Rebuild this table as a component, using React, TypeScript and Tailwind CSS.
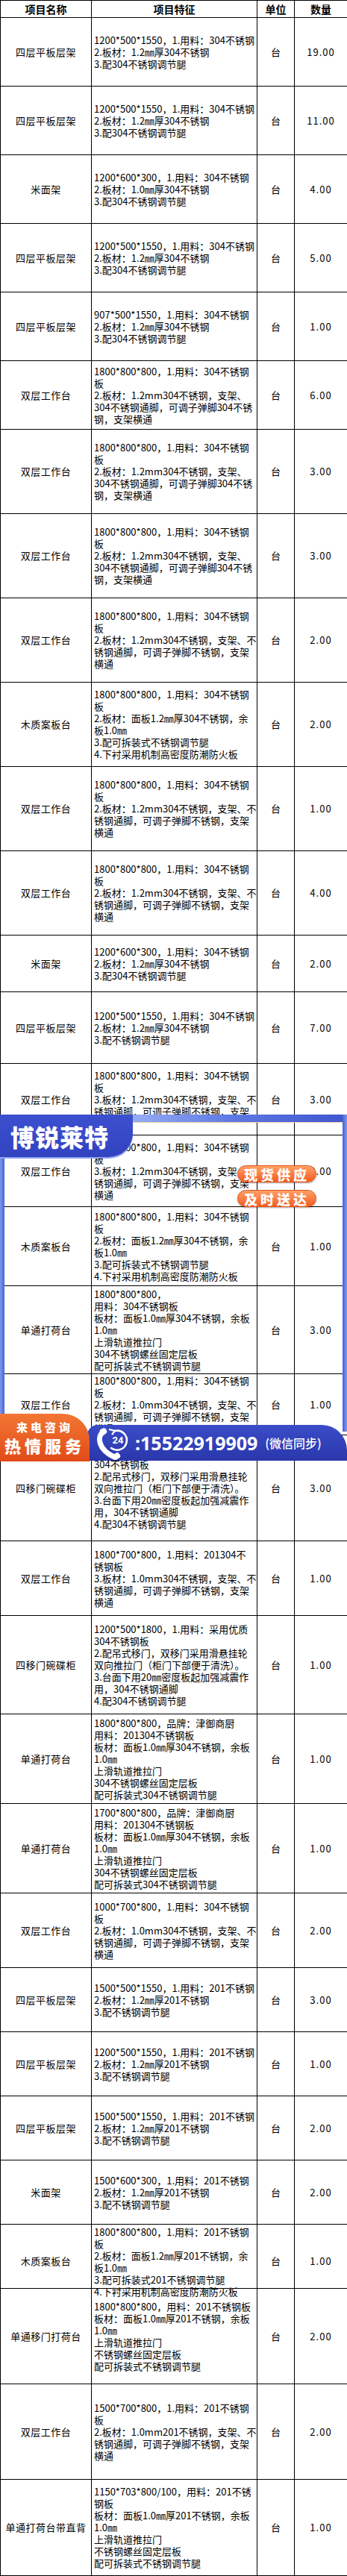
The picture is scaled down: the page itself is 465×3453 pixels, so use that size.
import React from 'react'

type Row = {
  name: string
  lines: string[]
  qty: string
  h: string
  top?: boolean
}

const shelf304 = (size: string, mm: string, leg: string) => [
  `${size}，1.用料：304不锈钢`,
  `2.板材：${mm}㎜厚304不锈钢`,
  leg,
]

const shelf201 = (size: string) => [
  `${size}，1.用料：201不锈钢`,
  '2.板材：1.2㎜厚201不锈钢',
  '3.配不锈钢调节腿',
]

// 双层工作台, old wording (304 legs)
const benchA = [
  '1800*800*800，1.用料：304不锈钢',
  '板',
  '2.板材：1.2mm304不锈钢，支架、',
  '304不锈钢通脚，可调子弹脚304不锈',
  '钢，支架横通',
]

const bench = (first: string, second: string, board: string) => [
  first,
  second,
  board,
  '锈钢通脚，可调子弹脚不锈钢，支架',
  '横通',
]

const wood = (mat: string, leg: string) => [
  `1800*800*800，1.用料：${mat}不锈钢`,
  '板',
  `2.板材：面板1.2㎜厚${mat}不锈钢，余`,
  '板1.0㎜',
  leg,
  '4.下衬采用机制高密度防潮防火板',
]

const cabinet = [
  '1200*500*1800，1.用料：采用优质',
  '304不锈钢板',
  '2.配吊式移门，双移门采用滑悬挂轮',
  '双向推拉门（柜门下部便于清洗）。',
  '3.台面下用20㎜密度板起加强减震作',
  '用，304不锈钢通脚',
  '4.配304不锈钢调节腿',
]

const counter = (size: string) => [
  `${size}，品牌：津御商厨`,
  '用料：201304不锈钢板',
  '板材：面板1.0㎜厚304不锈钢，余板',
  '1.0㎜',
  '上滑轨道推拉门',
  '304不锈钢螺丝固定层板',
  '配可拆装式304不锈钢调节腿',
]

const b304 = '1800*800*800，1.用料：304不锈钢'

const rows: Row[] = [
  { name: '四层平板层架', qty: '19.00', h: 'h-[92px]', lines: shelf304('1200*500*1550', '1.2', '3.配304不锈钢调节腿') },
  { name: '四层平板层架', qty: '11.00', h: 'h-[92px]', lines: shelf304('1200*500*1550', '1.2', '3.配304不锈钢调节腿') },
  { name: '米面架', qty: '4.00', h: 'h-[92px]', lines: shelf304('1200*600*300', '1.0', '3.配304不锈钢调节腿') },
  { name: '四层平板层架', qty: '5.00', h: 'h-[92px]', lines: shelf304('1200*500*1550', '1.2', '3.配304不锈钢调节腿') },
  { name: '四层平板层架', qty: '1.00', h: 'h-[92px]', lines: shelf304('907*500*1550', '1.2', '3.配304不锈钢调节腿') },
  { name: '双层工作台', qty: '6.00', h: 'h-[92px]', lines: benchA },
  { name: '双层工作台', qty: '3.00', h: 'h-[113px]', lines: benchA },
  { name: '双层工作台', qty: '3.00', h: 'h-[113px]', lines: benchA },
  { name: '双层工作台', qty: '2.00', h: 'h-[113px]', lines: bench(b304, '板', '2.板材：1.2mm304不锈钢，支架、不') },
  { name: '木质案板台', qty: '2.00', h: 'h-[113px]', lines: wood('304', '3.配可拆装式不锈钢调节腿') },
  { name: '双层工作台', qty: '1.00', h: 'h-[113px]', lines: bench(b304, '板', '2.板材：1.2mm304不锈钢，支架、不') },
  { name: '双层工作台', qty: '4.00', h: 'h-[113px]', lines: bench(b304, '板', '2.板材：1.2mm304不锈钢，支架、不') },
  { name: '米面架', qty: '2.00', h: 'h-[76px]', lines: shelf304('1200*600*300', '1.2', '3.配304不锈钢调节腿') },
  { name: '四层平板层架', qty: '7.00', h: 'h-[96px]', lines: shelf304('1200*500*1550', '1.2', '3.配不锈钢调节腿') },
  { name: '双层工作台', qty: '3.00', h: 'h-[96px]', lines: bench(b304, '板', '3.板材：1.2mm304不锈钢，支架、不') },
  { name: '双层工作台', qty: '3.00', h: 'h-[96px]', lines: bench(b304, '板', '3.板材：1.2mm304不锈钢，支架、不') },
  { name: '木质案板台', qty: '1.00', h: 'h-[106px]', lines: wood('304', '3.配可拆装式不锈钢调节腿') },
  {
    name: '单通打荷台',
    qty: '3.00',
    h: 'h-[118px]',
    lines: [
      '1800*800*800，',
      '用料：304不锈钢板',
      '板材：面板1.0㎜厚304不锈钢，余板',
      '1.0㎜',
      '上滑轨道推拉门',
      '304不锈钢螺丝固定层板',
      '配可拆装式不锈钢调节腿',
    ],
  },
  { name: '双层工作台', qty: '1.00', h: 'h-[82px]', lines: bench(b304, '板', '2.板材：1.0mm304不锈钢，支架、不') },
  { name: '四移门碗碟柜', qty: '3.00', h: 'h-[142px]', lines: cabinet },
  {
    name: '双层工作台',
    qty: '1.00',
    h: 'h-[100px]',
    lines: bench('1800*700*800，1.用料：201304不', '锈钢板', '3.板材：1.0mm304不锈钢，支架、不'),
  },
  { name: '四移门碗碟柜', qty: '1.00', h: 'h-[132px]', lines: cabinet },
  { name: '单通打荷台', qty: '1.00', h: 'h-[120px]', lines: counter('1800*800*800') },
  { name: '单通打荷台', qty: '1.00', h: 'h-[120px]', lines: counter('1700*800*800') },
  {
    name: '双层工作台',
    qty: '2.00',
    h: 'h-[100px]',
    lines: bench('1000*700*800，1.用料：304不锈钢', '板', '2.板材：1.0mm304不锈钢，支架、不'),
  },
  { name: '四层平板层架', qty: '3.00', h: 'h-[86px]', lines: shelf201('1500*500*1550') },
  { name: '四层平板层架', qty: '1.00', h: 'h-[86px]', lines: shelf201('1200*500*1550') },
  { name: '四层平板层架', qty: '2.00', h: 'h-[86px]', lines: shelf201('1500*500*1550') },
  { name: '米面架', qty: '2.00', h: 'h-[86px]', lines: shelf201('1500*600*300') },
  { name: '木质案板台', qty: '1.00', h: 'h-[86px]', top: true, lines: wood('201', '3.配可拆装式201不锈钢调节腿') },
  {
    name: '单通移门打荷台',
    qty: '2.00',
    h: 'h-[128px]',
    lines: [
      '1800*800*800，用料：201不锈钢板',
      '板材：面板1.0㎜厚201不锈钢，余板',
      '1.0㎜',
      '上滑轨道推拉门',
      '不锈钢螺丝固定层板',
      '配可拆装式不锈钢调节腿',
    ],
  },
  {
    name: '双层工作台',
    qty: '2.00',
    h: 'h-[128px]',
    lines: bench('1500*700*800，1.用料：201不锈钢', '板', '2.板材：1.0mm201不锈钢，支架、不'),
  },
  {
    name: '单通打荷台带直背',
    qty: '1.00',
    h: 'h-[129px]',
    lines: [
      '1150*703*800/100，用料：201不锈',
      '钢板',
      '板材：面板1.0㎜厚201不锈钢，余板',
      '1.0㎜',
      '上滑轨道推拉门',
      '不锈钢螺丝固定层板',
      '配可拆装式不锈钢调节腿',
    ],
  },
]

const cols = 'grid grid-cols-[122px_222px_50px_71px]'

function PhoneIcon() {
  return (
    <svg width="48" height="48" viewBox="0 0 48 48" fill="none">
      <path
        d="M27 8 A13 13 0 1 1 22 31"
        stroke="white"
        strokeWidth="2.6"
        strokeLinecap="round"
      />
      <path d="M19 6 L27 8 L23 13" stroke="white" strokeWidth="2.2" fill="none" />
      <path
        d="M11 10 C3 15, 4 33, 26 43"
        stroke="white"
        strokeWidth="7"
        strokeLinecap="round"
      />
      <rect x="7" y="5" width="9" height="8" rx="3" fill="white" transform="rotate(-25 11 9)" />
      <rect x="24" y="38" width="10" height="8" rx="3" fill="white" transform="rotate(-30 29 42)" />
      <text
        x="31"
        y="25"
        textAnchor="middle"
        fill="white"
        fontSize="13"
        fontWeight="700"
        fontFamily="Roboto, 'Noto Sans', sans-serif"
      >
        24
      </text>
    </svg>
  )
}

export default function App() {
  return (
    <div className="relative w-[465px] bg-white font-['Noto_Sans_CJK_SC','Noto_Sans',sans-serif] text-[13px] leading-4 text-black">
      {/* table */}
      <div className={`${cols} h-[24px] border-t border-b border-l border-black text-[14px] font-bold`}>
        <div className="flex items-center justify-center border-r border-black">项目名称</div>
        <div className="flex items-center justify-center border-r border-black">项目特征</div>
        <div className="flex items-center justify-center border-r border-black">单位</div>
        <div className="flex items-center justify-center border-r border-black">数量</div>
      </div>
      {rows.map((r, i) => (
        <div key={i} className={`${cols} ${r.h} border-b border-l border-black`}>
          <div className="flex items-center justify-center border-r border-black tracking-[0.5px]">
            {r.name}
          </div>
          <div
            className={
              r.top
                ? 'flex items-start overflow-x-visible overflow-y-clip border-r border-black pl-[3px] pt-[2px]'
                : 'flex items-center border-r border-black pl-[3px]'
            }
          >
            <div>
              {r.lines.map((l, j) => (
                <div key={j} className="whitespace-nowrap">
                  {l}
                </div>
              ))}
            </div>
          </div>
          <div className="flex items-center justify-center border-r border-black">台</div>
          <div className="flex items-center justify-center border-r border-black tracking-[1px]">
            {r.qty}
          </div>
        </div>
      ))}

      {/* promo frame */}
      <div className="absolute left-[160px] right-0 top-[1494px] h-[10px] bg-gradient-to-r from-[#9db2f7] via-[#5d78e2] to-[#3f55cf]" />
      <div className="absolute left-[175px] right-[6px] top-[1504px] h-[1px] bg-[#f4cfa6]" />
      <div className="absolute right-0 top-[1494px] h-[425px] w-[6px] bg-gradient-to-r from-[#4a63d8] to-[#7f98ee]" />
      <div className="absolute left-0 top-[1540px] h-[360px] w-[6px] bg-gradient-to-r from-[#7f98ee] to-[#4a63d8]" />
      <div className="absolute left-0 top-[1494px] flex h-[57px] w-[178px] items-center rounded-br-[32px] bg-gradient-to-b from-[#3c50cf] to-[#3243c0] pl-[14px] shadow-[0_2px_0_#8ea4f2]">
        <span className="text-[32px] font-black leading-none tracking-[1px] text-white">博锐莱特</span>
      </div>
      <div className="absolute left-[318px] top-[1562px] flex h-[23px] w-[106px] items-center justify-center rounded-full border border-[#e2561c] bg-gradient-to-b from-[#ffa066] to-[#f25a1c] text-[18px] font-black leading-none tracking-[4px] text-white shadow-[0_1px_2px_rgba(0,0,0,0.35)]">
        现货供应
      </div>
      <div className="absolute left-[318px] top-[1595px] flex h-[23px] w-[106px] items-center justify-center rounded-full border border-[#e2561c] bg-gradient-to-b from-[#ffa066] to-[#f25a1c] text-[18px] font-black leading-none tracking-[4px] text-white shadow-[0_1px_2px_rgba(0,0,0,0.35)]">
        及时送达
      </div>

      {/* phone bar */}
      <div className="absolute left-[117px] right-0 top-[1910px] flex h-[48px] items-center rounded-tl-[14px] rounded-tr-[34px] bg-gradient-to-b from-[#3a4cc8] to-[#2a37ab] pl-[10px]">
        <PhoneIcon />
        <span className="ml-[6px] font-['Noto_Sans',sans-serif] text-[25px] font-bold leading-none text-white">
          :15522919909
        </span>
        <span className="ml-[10px] text-[16px] font-medium leading-none text-white">(微信同步)</span>
      </div>
      <div className="absolute left-0 top-[1895px] flex h-[64px] w-[120px] flex-col items-center justify-center rounded-tr-[36px] bg-gradient-to-b from-[#f27634] to-[#e24a18] text-white">
        <span className="text-[15px] font-black leading-[20px] tracking-[4px]">来电咨询</span>
        <span className="text-[22px] font-black leading-[28px] tracking-[5px]">热情服务</span>
      </div>
    </div>
  )
}
